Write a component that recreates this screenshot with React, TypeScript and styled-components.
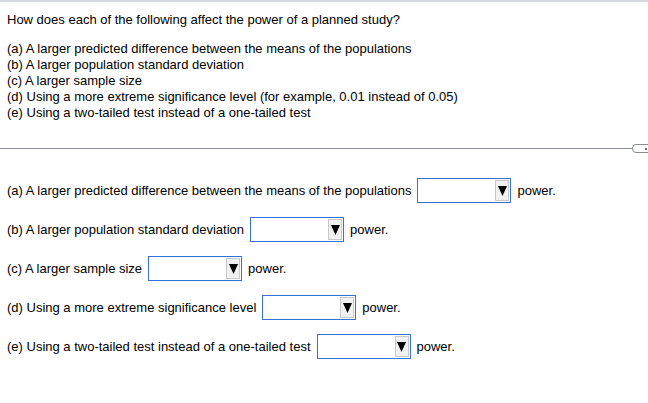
import React from "react";
import styled, { createGlobalStyle } from "styled-components";

const Global = createGlobalStyle`
  html, body { margin: 0; padding: 0; background: #fff; }
  body { font-family: Arial, "Liberation Sans", sans-serif; font-size: 13px; color: #000; }
`;

const Page = styled.div`
  width: 648px;
  height: 403px;
  border-top: 2px solid #d4d8e0;
  box-sizing: border-box;
  overflow: hidden;
`;

const Question = styled.div`
  padding: 10px 7px 0 7px;
`;

const Prompt = styled.p`
  margin: 0 0 13px 0;
  line-height: 16px;
`;

const List = styled.div`
  display: flex;
  flex-direction: column;
`;

const Item = styled.div`
  line-height: 16px;
  white-space: nowrap;
`;

const DividerRow = styled.div`
  display: flex;
  align-items: center;
  margin-top: 23px;
  height: 9px;
`;

const Rule = styled.div`
  flex: 1;
  height: 1px;
  background: #8a8d94;
`;

const Handle = styled.div`
  width: 14px;
  height: 7px;
  border: 1px solid #8a8d94;
  border-right: none;
  border-radius: 5px 0 0 5px;
  display: flex;
  align-items: center;
  justify-content: flex-end;
  padding-right: 1px;
  &::after {
    content: "";
    width: 2px;
    height: 2px;
    background: #6b6e75;
  }
`;

const Answers = styled.div`
  display: flex;
  flex-direction: column;
  gap: 14px;
  padding: 25px 7px 0 7px;
`;

const Row = styled.div`
  display: flex;
  align-items: center;
  height: 25px;
  white-space: nowrap;
`;

const Label = styled.span`
  margin-right: 6px;
`;

const Select = styled.div`
  width: 94px;
  height: 25px;
  box-sizing: border-box;
  border: 1px solid #3a6fd6;
  display: flex;
  align-items: center;
  justify-content: flex-end;
  padding: 1px;
  margin-right: 6px;
`;

const ArrowBtn = styled.div`
  width: 14px;
  height: 21px;
  box-sizing: border-box;
  background: #f1f1f1;
  border: 1px solid #c9c9c9;
  display: flex;
  align-items: center;
  justify-content: center;
`;

const Power = styled.span``;

const Arrow = () => (
  <svg width="9" height="10" viewBox="0 0 9 10">
    <polygon points="0,0 9,0 4.5,10" fill="#000" />
  </svg>
);

const items = [
  "(a) A larger predicted difference between the means of the populations",
  "(b) A larger population standard deviation",
  "(c) A larger sample size",
  "(d) Using a more extreme significance level (for example, 0.01 instead of 0.05)",
  "(e) Using a two-tailed test instead of a one-tailed test",
];

const answers = [
  { label: "(a) A larger predicted difference between the means of the populations", tail: "power." },
  { label: "(b) A larger population standard deviation", tail: "power." },
  { label: "(c) A larger sample size", tail: "power." },
  { label: "(d) Using a more extreme significance level", tail: "power." },
  { label: "(e) Using a two-tailed test instead of a one-tailed test", tail: "power." },
];

export default function App() {
  return (
    <Page>
      <Global />
      <Question>
        <Prompt>How does each of the following affect the power of a planned study?</Prompt>
        <List>
          {items.map((t) => (
            <Item key={t}>{t}</Item>
          ))}
        </List>
      </Question>
      <DividerRow>
        <Rule />
        <Handle />
      </DividerRow>
      <Answers>
        {answers.map((a) => (
          <Row key={a.label}>
            <Label>{a.label}</Label>
            <Select>
              <ArrowBtn>
                <Arrow />
              </ArrowBtn>
            </Select>
            <Power>{a.tail}</Power>
          </Row>
        ))}
      </Answers>
    </Page>
  );
}
